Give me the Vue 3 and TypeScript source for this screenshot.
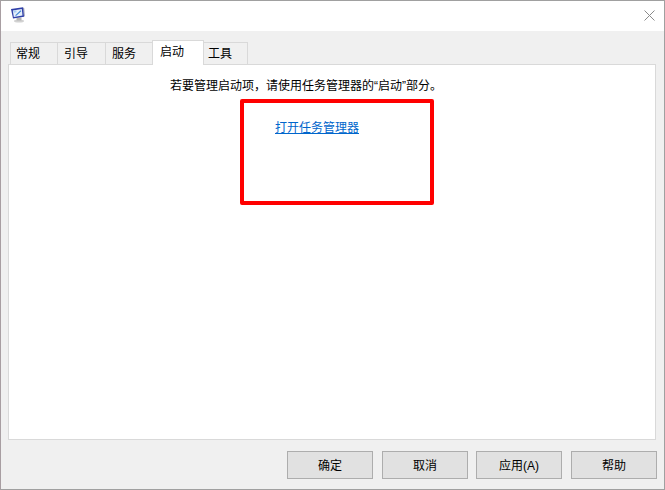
<script setup lang="ts">
const tabs: { label: string; active?: boolean }[] = [
  { label: '常规' },
  { label: '引导' },
  { label: '服务' },
  { label: '启动', active: true },
  { label: '工具' },
]
const buttons: string[] = ['确定', '取消', '应用(A)', '帮助']
</script>

<template>
  <div class="window">
    <div class="bleed"></div>
    <header class="titlebar">
      <svg class="app-icon" width="16" height="17" viewBox="0 0 16 17">
        <ellipse cx="9" cy="15" rx="5" ry="1.5" fill="#d2d2d2" />
        <path d="M6.5 11.5h5v3h-5z" fill="#b4b4b4" />
        <path d="M13 1.5l1.2.6.6 8-1 .9z" fill="#9a9db0" />
        <path d="M1 3l12-1.8 1 9.6-11 1.7z" fill="#2f3fa8" />
        <path d="M2.8 4.4l9-1.4.7 6.6-8.7 1.3z" fill="#e6f0fa" />
        <path d="M5 9.5l5.5-5.2.8.9-5 4.6z" fill="#3f86d6" />
        <path d="M3.3 4.8l3-.5.3 2-2.9.5z" fill="#a9cdf0" />
      </svg>
      <svg class="close" width="11" height="11" viewBox="0 0 11 11">
        <path d="M.5.5l10 10M10.5.5l-10 10" stroke="#8a8a8a" stroke-width="1" fill="none" />
      </svg>
    </header>
    <main class="client">
      <nav class="tabs">
        <div v-for="t in tabs" :key="t.label" class="tab" :class="{ active: t.active }">{{ t.label }}</div>
      </nav>
      <section class="page">
        <p class="hint">若要管理启动项，请使用任务管理器的“启动”部分。</p>
        <a class="link" href="#">打开任务管理器</a>
        <div class="highlight"></div>
      </section>
      <footer class="actions">
        <button v-for="b in buttons" :key="b" class="btn" type="button">{{ b }}</button>
      </footer>
    </main>
  </div>
</template>

<style>
html, body { margin: 0; padding: 0; background: #fff; }
</style>

<style scoped>
.window {
  width: 665px;
  height: 490px;
  box-sizing: border-box;
  border: 1px solid #a0a0a0;
  border-left-color: #a89ea2;
  display: flex;
  flex-direction: column;
  font-family: "Liberation Sans", "Noto Sans CJK SC", sans-serif;
  font-size: 12px;
  color: #000;
  overflow: hidden;
  position: relative;
}
.bleed {
  position: absolute;
  top: -1px;
  left: 135px;
  width: 26px;
  height: 1px;
  background: linear-gradient(90deg, #c9b98a 0 36%, #55504a 46% 76%, #a0a0a0 100%);
}
.titlebar {
  height: 30px;
  flex: none;
  background: #fff;
  display: flex;
  align-items: center;
  justify-content: space-between;
  padding: 0 9px 0 9px;
}
.app-icon { margin-top: -3px; }
.close { margin-left: auto; margin-top: -1px; }
.client {
  flex: 1;
  background: #f0f0f0;
  display: flex;
  flex-direction: column;
  padding: 9px 7px 0 7px;
  min-height: 0;
}
.tabs {
  display: flex;
  height: 24px;
  padding-left: 2px;
  align-items: flex-end;
  position: relative;
  z-index: 1;
  flex: none;
}
.tab {
  box-sizing: border-box;
  width: 48px;
  height: 22px;
  margin-right: -1px;
  border: 1px solid #d9d9d9;
  border-bottom: none;
  background: #f0f0f0;
  padding-left: 5px;
  line-height: 23px;
}
.tab:nth-child(2) { width: 49px; padding-left: 6px; }
.tab:nth-child(3) { padding-left: 6px; }
.tab:nth-child(5) { width: 45px; padding-left: 4px; }
.tab.active {
  width: 52px;
  height: 25px;
  margin-bottom: -1px;
  background: #fff;
  position: relative;
  z-index: 1;
  padding-left: 7px;
}
.page {
  box-sizing: border-box;
  height: 376px;
  margin-right: 1px;
  background: #fff;
  border: 1px solid #d9d9d9;
  position: relative;
  display: flex;
  flex-direction: column;
  flex: none;
}
.hint {
  margin: 13px 0 0 161px;
  line-height: 16px;
  white-space: nowrap;
}
.link {
  margin: 26px 0 0 266px;
  line-height: 16px;
  color: #0066cc;
  text-decoration: underline;
  align-self: flex-start;
}
.highlight {
  position: absolute;
  left: 231px;
  top: 34px;
  width: 194px;
  height: 106px;
  box-sizing: border-box;
  border: 4px solid #ff0000;
  border-radius: 2px;
}
.actions {
  display: flex;
  justify-content: flex-end;
  gap: 9px;
  margin-top: 11px;
}
.btn {
  box-sizing: border-box;
  width: 86px;
  height: 28px;
  background: #e1e1e1;
  border: 1px solid #adadad;
  font: inherit;
  color: #000;
  padding: 0 0 2px;
}
.btn:nth-child(3) { margin-left: -1px; }
</style>
